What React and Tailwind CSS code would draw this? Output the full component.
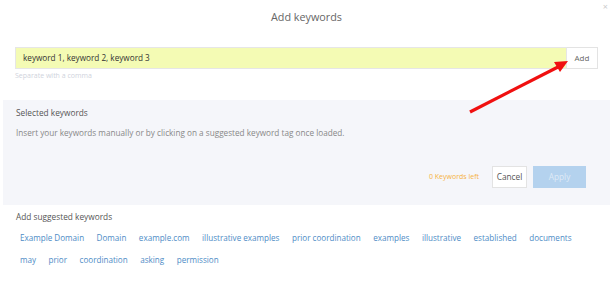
import React from "react";

const tags1 = ["Example Domain", "Domain", "example.com", "illustrative examples", "prior coordination", "examples", "illustrative", "established", "documents"];
const tags2 = ["may", "prior", "coordination", "asking", "permission"];

export default function App() {
  return (
    <div className="relative w-[613px] h-[288px] bg-white overflow-hidden" style={{ fontFamily: '"Open Sans", sans-serif' }}>
      <div className="relative h-[35px] flex items-center justify-center">
        <span className="text-[10.8px] text-[#666] leading-none">Add keywords</span>
        <span className="absolute right-[5px] top-[2px] text-[9px] text-[#ccc] leading-none">×</span>
      </div>
      <div className="mt-[12px] px-[15px]">
        <div className="flex h-[22px]">
          <div className="flex-1 flex items-center bg-[#f4fbb4] border border-[#e6e6e6] pl-[7px] text-[8.2px] text-[#333]">keyword 1, keyword 2, keyword 3</div>
          <div className="w-[31px] flex items-center justify-center bg-white border border-[#e3e3e3] border-l-0 text-[8px] text-[#666]">Add</div>
        </div>
        <div className="mt-[2px] text-[7px] text-[#cfd3dc] leading-[10px]">Separate with a comma</div>
      </div>
      <div className="mt-[19px] mx-[3px] h-[105px] bg-[#f5f6fa] px-[13px] flex flex-col">
        <div className="mt-[7px] text-[8.3px] text-[#555] leading-[12px]">Selected keywords</div>
        <div className="mt-[8px] text-[8.2px] text-[#888] leading-[12px]">Insert your keywords manually or by clicking on a suggested keyword tag once loaded.</div>
        <div className="mt-[27px] flex items-center justify-end pr-[11px]">
          <span className="text-[7px] text-[#f5b33f] mr-[13px]">0 Keywords left</span>
          <div className="w-[35px] h-[22px] bg-white border border-[#e3e3e3] flex items-center justify-center text-[8.3px] text-[#555]">Cancel</div>
          <div className="ml-[6px] w-[53px] h-[22px] bg-[#b4d2ee] flex items-center justify-center text-[8.3px] text-[#dfeaf6]">Apply</div>
        </div>
      </div>
      <div className="px-[16px]">
        <div className="mt-[6px] text-[8.3px] text-[#555] leading-[12px]">Add suggested keywords</div>
        <div className="mt-[9px] flex flex-wrap gap-x-[4.5px]">
          {tags1.map((t) => (
            <span key={t} className="px-[4px] text-[8.1px] text-[#4e8cc6] leading-[12px]">{t}</span>
          ))}
        </div>
        <div className="mt-[10px] flex flex-wrap gap-x-[4.5px]">
          {tags2.map((t) => (
            <span key={t} className="px-[4px] text-[8.1px] text-[#4e8cc6] leading-[12px]">{t}</span>
          ))}
        </div>
      </div>
      <svg className="absolute left-0 top-0 pointer-events-none" width="613" height="288">
        <line x1="470" y1="112" x2="558" y2="67" stroke="#f01010" strokeWidth="3.2" />
        <polygon points="568,61 554,62 560,72" fill="#f01010" />
      </svg>
    </div>
  );
}
